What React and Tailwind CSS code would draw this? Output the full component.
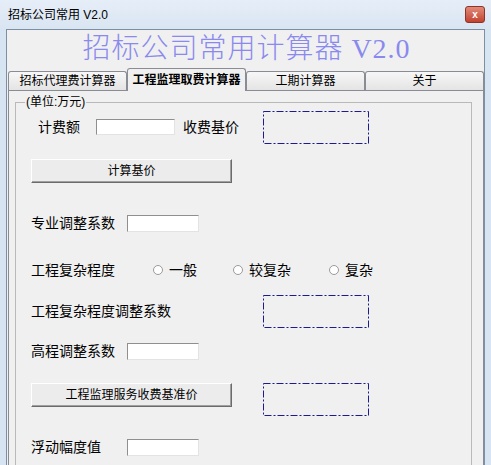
const font = { fontFamily: '"Liberation Sans", "Noto Sans CJK SC", sans-serif' };

const TextBox = ({ className = "" }) => (
  <div
    className={
      "bg-white border border-t-[#8e8f8f] border-l-[#8e8f8f] border-b-[#e3e3e3] border-r-[#e3e3e3] " +
      className
    }
  />
);

const DashBox = () => (
  <svg width="106" height="33" className="shrink-0">
    <rect
      x="0.5"
      y="0.5"
      width="105"
      height="32"
      fill="none"
      stroke="#1c1c8e"
      strokeWidth="1"
      strokeDasharray="7 2 2 2"
    />
  </svg>
);

const Button = ({ children }) => (
  <button className="w-[201px] h-[24px] shrink-0 bg-[#ececec] border border-t-white border-l-white border-b-[#6b6b6b] border-r-[#6b6b6b] shadow-[inset_-1px_-1px_0_#a0a0a0] text-[12px] text-black leading-none">
    {children}
  </button>
);

const Radio = ({ label, className = "" }) => (
  <div className={"flex items-center " + className}>
    <span className="w-[10px] h-[10px] rounded-full bg-white border border-[#9a9a9a] shrink-0" />
    <span className="ml-[6px]">{label}</span>
  </div>
);

const tabs = ["招标代理费计算器", "工程监理取费计算器", "工期计算器", "关于"];

export default function App() {
  return (
    <div
      className="w-[491px] h-[465px] overflow-hidden flex flex-col bg-[#d7e4f2] text-black"
      style={font}
    >
      {/* title bar */}
      <div className="h-[29px] shrink-0 flex items-center justify-between pl-[8px] pr-[6px] bg-gradient-to-b from-[#e6eef8] to-[#d9e5f2]">
        <span className="text-[12px] leading-none">招标公司常用 V2.0</span>
        <div className="w-[20px] h-[17px] rounded-[3px] bg-gradient-to-b from-[#e08a7a] to-[#c1412e] border border-[#8e3426] flex items-center justify-center text-white text-[10px] font-bold leading-none">
          x
        </div>
      </div>

      <div className="flex-1 min-h-0 flex pl-[6px] pr-[7px]">
        <div className="flex-1 flex flex-col bg-[#f0f0f0] border-l border-t border-r border-[#7f8fa3]">
          {/* heading */}
          <div className="h-[38px] shrink-0 flex items-center justify-center pl-[2px]">
            <span
              className="text-[28px] leading-none text-[#8a8aee] tracking-[1px] font-light"
              style={{ fontFamily: '"Liberation Serif", "Noto Sans CJK SC", serif' }}
            >
              招标公司常用计算器 V2.0
            </span>
          </div>

          {/* tabs */}
          <div className="h-[22px] shrink-0 flex items-end pl-[1px]">
            {tabs.map((t, i) =>
              i === 1 ? (
                <div
                  key={t}
                  className="relative z-10 -mb-px w-[119px] h-[23px] flex items-center justify-center bg-[#f0f0f0] border border-b-0 border-[#898c95] rounded-t-[3px] text-[12px] font-bold leading-none"
                >
                  {t}
                </div>
              ) : (
                <div
                  key={t}
                  className="w-[119px] h-[19px] flex items-center justify-center bg-gradient-to-b from-[#f7f7f7] to-[#e4e4e4] border border-b-0 border-[#898c95] rounded-t-[3px] text-[12px] leading-none"
                >
                  {t}
                </div>
              )
            )}
          </div>

          {/* tab panel */}
          <div className="flex-1 min-h-0 overflow-hidden ml-px border-l border-t border-r border-[#898c95] bg-[#f0f0f0]">
            <div className="mt-[11px] ml-[6px] mr-[11px] h-[420px] border border-[#b9b9b9] text-[14px] leading-none">
              <div className="w-fit ml-[9px] -mt-[8px] h-[14px] px-[1px] bg-[#f0f0f0] text-[12px] leading-[14px]">
                (单位:万元)
              </div>

              <div className="pl-[15px]">
                <div className="mt-[2px] h-[32px] flex items-center">
                  <span className="ml-[7px]">计费额</span>
                  <TextBox className="ml-[16px] w-[79px] h-[16px]" />
                  <span className="ml-[8px]">收费基价</span>
                  <div className="ml-[24px]">
                    <DashBox />
                  </div>
                </div>

                <div className="mt-[16px] flex">
                  <Button>计算基价</Button>
                </div>

                <div className="mt-[31px] h-[18px] flex items-center">
                  <span>专业调整系数</span>
                  <TextBox className="ml-[12px] w-[72px] h-[17px]" />
                </div>

                <div className="mt-[29px] h-[18px] flex items-center">
                  <span>工程复杂程度</span>
                  <Radio label="一般" className="ml-[38px]" />
                  <Radio label="较复杂" className="ml-[36px]" />
                  <Radio label="复杂" className="ml-[38px]" />
                </div>

                <div className="mt-[16px] h-[32px] flex items-center">
                  <span>工程复杂程度调整系数</span>
                  <div className="ml-[92px]">
                    <DashBox />
                  </div>
                </div>

                <div className="mt-[15px] h-[18px] flex items-center">
                  <span>高程调整系数</span>
                  <TextBox className="ml-[12px] w-[72px] h-[17px]" />
                </div>

                <div className="mt-[23px] h-[32px] flex items-start">
                  <Button>工程监理服务收费基准价</Button>
                  <div className="ml-[31px]">
                    <DashBox />
                  </div>
                </div>

                <div className="mt-[23px] h-[18px] flex items-center">
                  <span>浮动幅度值</span>
                  <TextBox className="ml-[26px] w-[72px] h-[17px]" />
                </div>
              </div>
            </div>
          </div>
        </div>
      </div>
    </div>
  );
}
